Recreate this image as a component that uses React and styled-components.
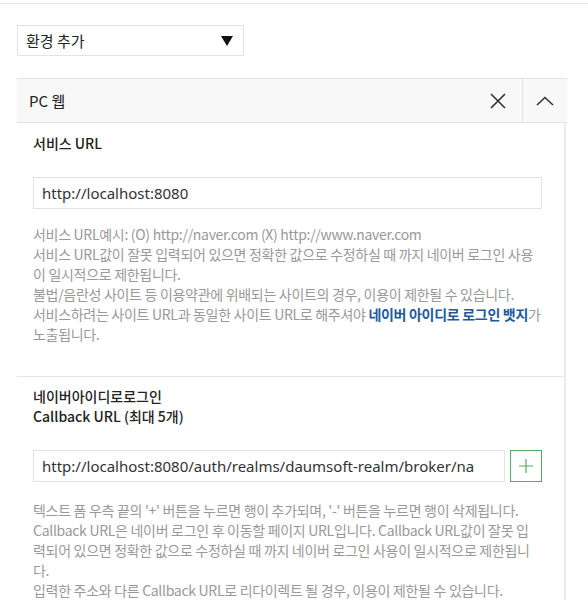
import React from 'react';
import styled, { createGlobalStyle } from 'styled-components';

const GlobalStyle = createGlobalStyle`
	body {
		margin: 0;
		background: #fff;
		font-family: "Noto Sans CJK KR", "Noto Sans", sans-serif;
		color: #333;
	}
`;

const App = () => {
	return (
		<Page>
			<GlobalStyle />
			<TopRule />
			<Select>
				<span>환경 추가</span>
				<Caret />
			</Select>
			<Panel>
				<PanelHeader>
					<PanelTitle>PC 웹</PanelTitle>
					<HeaderButton aria-label="삭제">
						<svg width="16" height="16" viewBox="0 0 16 16">
							<path d="M1 1L15 15M15 1L1 15" stroke="#333" strokeWidth="1.6" fill="none" />
						</svg>
					</HeaderButton>
					<HeaderButton $divided aria-label="접기">
						<svg width="18" height="10" viewBox="0 0 18 10">
							<path d="M1 9L9 1.5L17 9" stroke="#333" strokeWidth="1.6" fill="none" />
						</svg>
					</HeaderButton>
				</PanelHeader>
				<PanelBody>
					<Section>
						<Label>서비스 URL</Label>
						<InputRow>
							<TextInput>http://localhost:8080</TextInput>
						</InputRow>
						<Help>
							<Line>서비스 URL예시: (O) http://naver.com (X) http://www.naver.com</Line>
							<Line>서비스 URL값이 잘못 입력되어 있으면 정확한 값으로 수정하실 때 까지 네이버 로그인 사용</Line>
							<Line>이 일시적으로 제한됩니다.</Line>
							<Line>불법/음란성 사이트 등 이용약관에 위배되는 사이트의 경우, 이용이 제한될 수 있습니다.</Line>
							<Line>
								서비스하려는 사이트 URL과 동일한 사이트 URL로 해주셔야 <Strong>네이버 아이디로 로그인 뱃지</Strong>가
							</Line>
							<Line>노출됩니다.</Line>
						</Help>
					</Section>
					<Section $last>
						<Label>
							네이버아이디로로그인
							<br />
							Callback URL (최대 5개)
						</Label>
						<InputRow>
							<TextInput>http://localhost:8080/auth/realms/daumsoft-realm/broker/na</TextInput>
							<AddButton aria-label="추가">
								<svg width="14" height="14" viewBox="0 0 14 14">
									<path d="M7 0V14M0 7H14" stroke="#4cae6a" strokeWidth="1.2" fill="none" />
								</svg>
							</AddButton>
						</InputRow>
						<Help $gap={18}>
							<Line>텍스트 폼 우측 끝의 '+' 버튼을 누르면 행이 추가되며, '-' 버튼을 누르면 행이 삭제됩니다.</Line>
							<Line>Callback URL은 네이버 로그인 후 이동할 페이지 URL입니다. Callback URL값이 잘못 입</Line>
							<Line>력되어 있으면 정확한 값으로 수정하실 때 까지 네이버 로그인 사용이 일시적으로 제한됩니</Line>
							<Line>다.</Line>
							<Line>입력한 주소와 다른 Callback URL로 리다이렉트 될 경우, 이용이 제한될 수 있습니다.</Line>
						</Help>
					</Section>
				</PanelBody>
			</Panel>
		</Page>
	);
};

export default App;

// Styled components
const Page = styled.div`
	width: 588px;
	height: 609px;
	overflow: hidden;
	padding-top: 3px;
	box-sizing: border-box;
`;

const TopRule = styled.div`
	height: 1px;
	background: #e6e6e6;
`;

const Select = styled.div`
	margin: 21px 0 0 17px;
	width: 227px;
	height: 31px;
	box-sizing: border-box;
	border: 1px solid #e3e3e3;
	display: flex;
	align-items: center;
	justify-content: space-between;
	padding: 0 8px 0 8px;
	font-size: 15px;
	color: #222;
`;

const Caret = styled.span`
	width: 0;
	height: 0;
	border-left: 6px solid transparent;
	border-right: 6px solid transparent;
	border-top: 10px solid #111;
	margin-right: 2px;
`;

const Panel = styled.div`
	margin: 22px 0 0 17px;
	width: 550px;
`;

const PanelHeader = styled.div`
	height: 45px;
	box-sizing: border-box;
	background: #f8f8f8;
	border-top: 1px solid #e3e3e3;
	border-bottom: 1px solid #e3e3e3;
	display: flex;
	align-items: stretch;
`;

const PanelTitle = styled.div`
	flex: 1;
	display: flex;
	align-items: center;
	padding-left: 12px;
	font-size: 15px;
	color: #222;
`;

const HeaderButton = styled.div`
	width: 44px;
	display: flex;
	align-items: center;
	justify-content: center;
	border-left: ${(p) => (p.$divided ? '1px solid #e3e3e3' : 'none')};
	margin-right: ${(p) => (p.$divided ? '0' : '2px')};
`;

const PanelBody = styled.div`
	width: 549px;
	border-right: 2px solid #ececec;
	box-sizing: border-box;
`;

const Section = styled.div`
	padding: ${(p) => (p.$last ? '9px 0 0 16px' : '10px 0 32px 16px')};
	border-bottom: ${(p) => (p.$last ? 'none' : '1px solid #e6e6e6')};
`;

const Label = styled.div`
	font-size: 14px;
	font-weight: 500;
	line-height: 20px;
	color: #222;
`;

const InputRow = styled.div`
	display: flex;
	gap: 5px;
	margin-top: 24px;
`;

const TextInput = styled.div`
	flex: 1 1 auto;
	max-width: 509px;
	height: 32px;
	box-sizing: border-box;
	border: 1px solid #e3e3e3;
	padding: 0 8px;
	display: flex;
	align-items: center;
	font-size: 15px;
	color: #333;
	white-space: nowrap;
	overflow: hidden;
	font-family: "Noto Sans", "Noto Sans CJK KR", sans-serif;
`;

const AddButton = styled.div`
	width: 32px;
	height: 32px;
	flex: none;
	box-sizing: border-box;
	border: 1px solid #4cae6a;
	display: flex;
	align-items: center;
	justify-content: center;
	margin-right: 22px;
`;

const Help = styled.div`
	margin-top: ${(p) => p.$gap ?? 15}px;
	font-size: 14px;
	line-height: 20px;
	color: #999;
	letter-spacing: -0.3px;
`;

const Line = styled.div`
	white-space: nowrap;
`;

const Strong = styled.b`
	color: #1d5a9c;
	font-weight: 700;
`;
